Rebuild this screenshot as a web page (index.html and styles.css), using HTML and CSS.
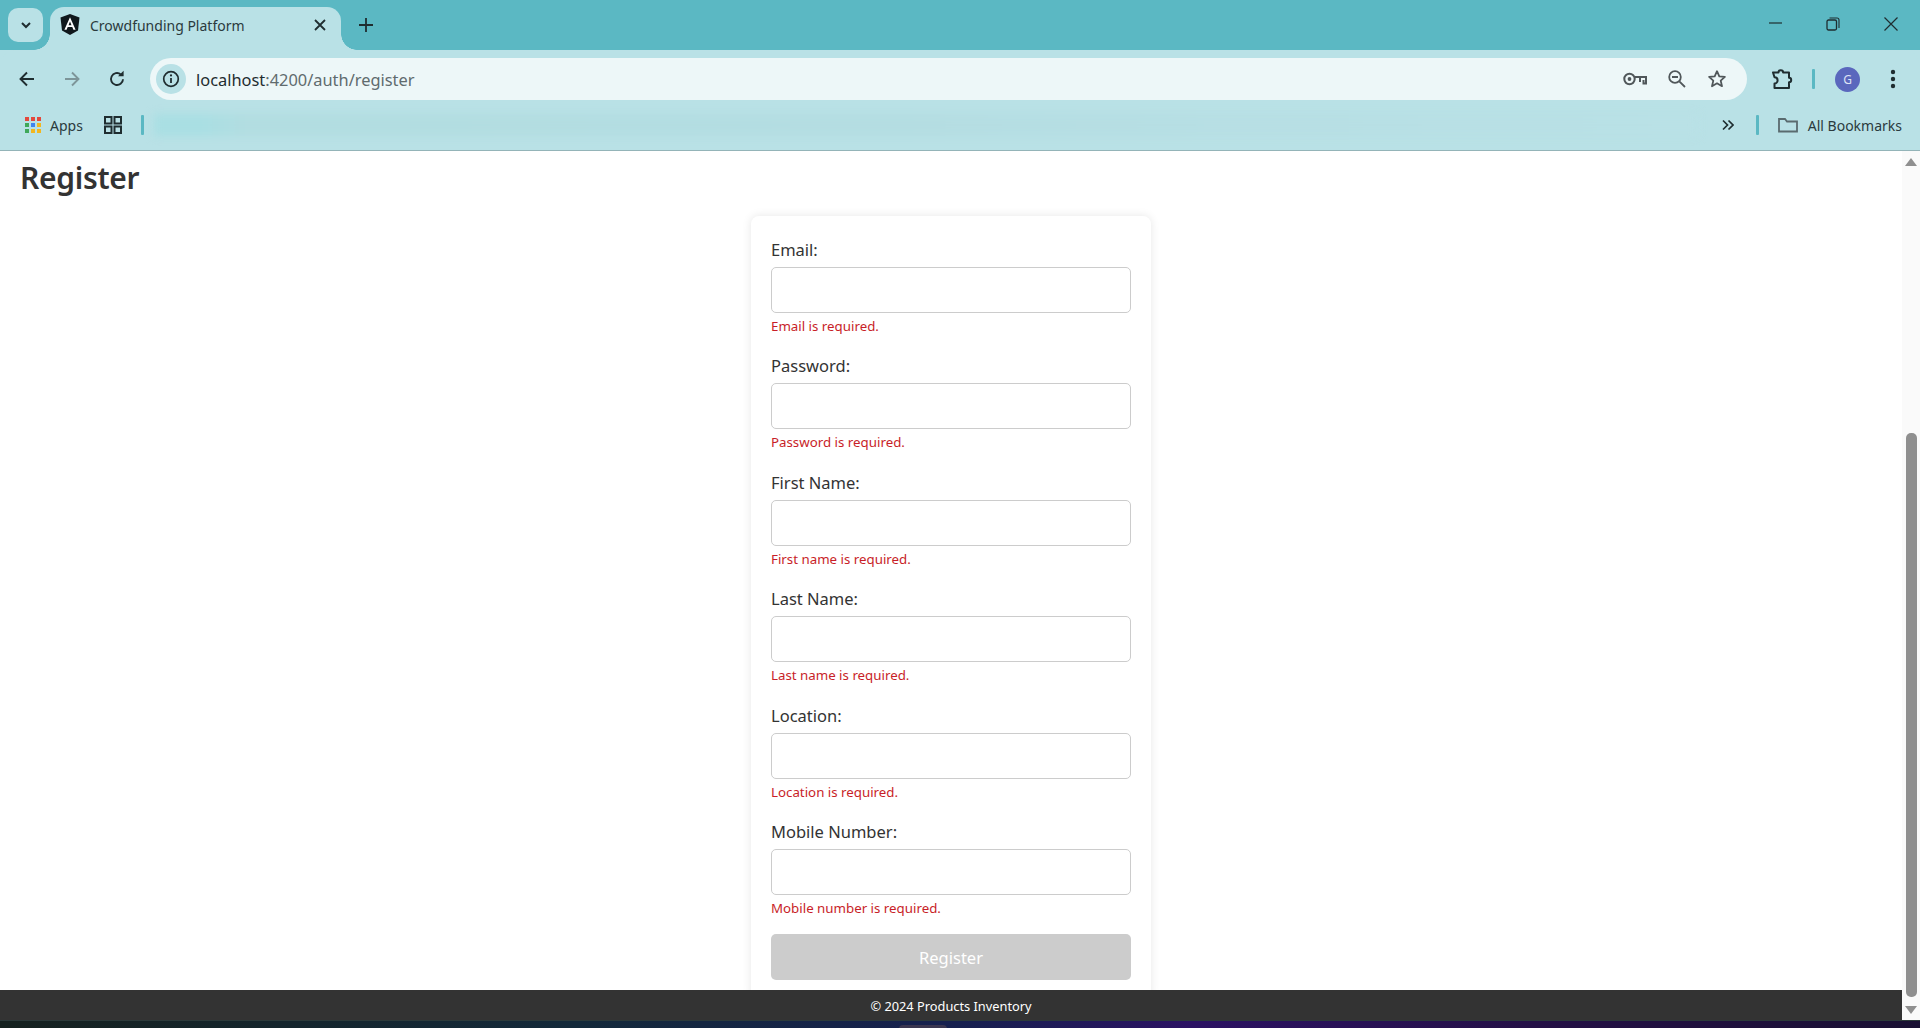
FILE: index.html
```html
<!DOCTYPE html>
<html lang="en">
<head>
    <meta charset="UTF-8">
    <meta name="viewport" content="width=device-width, initial-scale=1.0">
    <title>Crowdfunding Platform</title>
    <link rel="stylesheet" href="styles.css">
</head>
<body>
    <header class="browser">
        <div class="tabstrip">
            <button class="tab-search" aria-label="Search tabs">
                <svg width="14" height="14" viewBox="0 0 14 14"><path d="M3 5l4 4 4-4" fill="none" stroke="#1f2d30" stroke-width="2"/></svg>
            </button>
            <div class="tab">
                <svg class="favicon" width="20" height="22" viewBox="0 0 20 22"><path d="M10 0L19.5 3.4 18 16.4 10 21 2 16.4.5 3.4z" fill="#10181c"/><path d="M10 3.2L4.4 15.8h2.2l1.1-2.8h4.6l1.1 2.8h2.2zM8.500 11.200L10 7.500l1.500 3.700z" fill="#fff"/></svg>
                <span class="tab-title">Crowdfunding Platform</span>
                <svg class="tab-close" width="12" height="12" viewBox="0 0 12 12"><path d="M1 1l10 10M11 1L1 11" stroke="#1f2d30" stroke-width="1.8"/></svg>
            </div>
            <svg class="new-tab" width="14" height="14" viewBox="0 0 14 14"><path d="M7 0v14M0 7h14" stroke="#1f2d30" stroke-width="1.8"/></svg>
            <div class="window-controls">
                <svg width="14" height="14" viewBox="0 0 14 14"><path d="M1 6h13" stroke="#1f2d30" stroke-width="1.2"/></svg>
                <svg width="14" height="14" viewBox="0 0 14 14"><rect x="1" y="3" width="9.500" height="10" rx="1.500" fill="none" stroke="#1f2d30" stroke-width="1.3"/><path d="M3.500 1h7.500a2 2 0 0 1 2 2v8" fill="none" stroke="#1f2d30" stroke-width="1.1"/></svg>
                <svg width="14" height="14" viewBox="0 0 14 14"><path d="M.5.5l13 13M13.500.5l-13 13" stroke="#1f2d30" stroke-width="1.2"/></svg>
            </div>
        </div>

        <div class="toolbar">
            <svg class="nav-icon" width="18" height="18" viewBox="0 0 18 18"><path d="M16 9H3M9 2.500L2.500 9 9 15.500" fill="none" stroke="#1f2d30" stroke-width="1.9"/></svg>
            <svg class="nav-icon" width="18" height="18" viewBox="0 0 18 18"><path d="M2 9h13M9 2.500L15.500 9 9 15.500" fill="none" stroke="#7d9599" stroke-width="1.9"/></svg>
            <svg class="nav-icon" width="18" height="18" viewBox="0 0 18 18"><path d="M15 9.200A6 6 0 1 1 12.800 4.400" fill="none" stroke="#1f2d30" stroke-width="1.9"/><path d="M10 6.200h5.600V.8z" fill="#1f2d30"/></svg>
            <div class="omnibox">
                <span class="site-info">
                    <svg width="18" height="18" viewBox="0 0 18 18"><circle cx="9" cy="9" r="7.300" fill="none" stroke="#1f2d30" stroke-width="1.7"/><path d="M9 8v5" stroke="#1f2d30" stroke-width="1.8"/><circle cx="9" cy="5.400" r="1.100" fill="#1f2d30"/></svg>
                </span>
                <span class="url"><span class="url-host">localhost</span>:4200/auth/register</span>
                <svg class="omni-icon" width="24" height="14" viewBox="0 0 24 14"><circle cx="6.500" cy="7" r="5.200" fill="none" stroke="#50575a" stroke-width="2"/><circle cx="6.500" cy="7" r="1.900" fill="#50575a"/><path d="M11.500 5h11.500v6.500h-2.500V8M17 5.500v4.500" fill="none" stroke="#50575a" stroke-width="2"/></svg>
                <svg class="omni-icon" width="20" height="20" viewBox="0 0 20 20"><circle cx="8" cy="8" r="5.800" fill="none" stroke="#50575a" stroke-width="1.8"/><path d="M5 8h6M12.300 12.300L18 18" stroke="#50575a" stroke-width="1.8"/></svg>
                <svg class="omni-icon" width="20" height="20" viewBox="0 0 20 20"><path d="M10 2.200l2.300 5.200 5.600.5-4.200 3.700 1.300 5.600L10 14.300l-5 2.900 1.300-5.600-4.200-3.700 5.600-.5z" fill="none" stroke="#50575a" stroke-width="1.8" stroke-linejoin="round"/></svg>
            </div>
            <svg class="ext-icon" width="22" height="22" viewBox="0 0 22 22"><path d="M2 4.500h5.500a2.300 2.300 0 0 1 4.600 0H18v5.300a2.200 2.200 0 0 1 0 4.400V20H3.500v-4.500a2.800 2.800 0 0 0 0-6.200z" fill="none" stroke="#1f2d30" stroke-width="2" stroke-linejoin="round"/></svg>
            <span class="divider"></span>
            <span class="avatar">G</span>
            <svg class="kebab" width="6" height="20" viewBox="0 0 6 20"><circle cx="3" cy="3" r="2.200" fill="#1f2d30"/><circle cx="3" cy="10" r="2.200" fill="#1f2d30"/><circle cx="3" cy="17" r="2.200" fill="#1f2d30"/></svg>
        </div>

        <div class="bookmarks">
            <svg class="apps-icon" width="18" height="18" viewBox="0 0 18 18">
                <rect x="1" y="1" width="4" height="4" fill="#e3483c"/><rect x="7" y="1" width="4" height="4" fill="#e3483c"/><rect x="13" y="1" width="4" height="4" fill="#e3483c"/>
                <rect x="1" y="7" width="4" height="4" fill="#3fa85a"/><rect x="7" y="7" width="4" height="4" fill="#3f84ee"/><rect x="13" y="7" width="4" height="4" fill="#f2b71f"/>
                <rect x="1" y="13" width="4" height="4" fill="#3fa85a"/><rect x="7" y="13" width="4" height="4" fill="#f2b71f"/><rect x="13" y="13" width="4" height="4" fill="#f2b71f"/>
            </svg>
            <span class="bookmark-text">Apps</span>
            <svg class="group-icon" width="18" height="18" viewBox="0 0 18 18"><rect x="1" y="1" width="6.500" height="6.500" fill="none" stroke="#1f2d30" stroke-width="2"/><rect x="10.500" y="1" width="6.500" height="6.500" fill="none" stroke="#1f2d30" stroke-width="2"/><rect x="1" y="10.500" width="6.500" height="6.500" fill="none" stroke="#1f2d30" stroke-width="2"/><rect x="10.500" y="10.500" width="6.500" height="6.500" fill="none" stroke="#1f2d30" stroke-width="2"/></svg>
            <span class="divider"></span>
            <div class="blurred-links"></div>
            <svg class="more-icon" width="12" height="12" viewBox="0 0 12 12"><path d="M1 1.500L5.500 6 1 10.500M6.500 1.500L11 6l-4.500 4.500" fill="none" stroke="#1f2d30" stroke-width="1.7"/></svg>
            <span class="divider"></span>
            <svg class="folder-icon" width="20" height="18" viewBox="0 0 20 18"><path d="M1 15.500V3h6l2 2.500h10v10z" fill="none" stroke="#5a6b6f" stroke-width="1.800"/></svg>
            <span class="bookmark-text">All Bookmarks</span>
        </div>
    </header>

    <div class="viewport">
        <div class="page">
            <main class="content">
                <h1>Register</h1>
                <form class="register-card">
                    <div class="field">
                        <label for="email">Email:</label>
                        <input type="email" id="email">
                        <p class="error">Email is required.</p>
                    </div>
                    <div class="field">
                        <label for="password">Password:</label>
                        <input type="password" id="password">
                        <p class="error">Password is required.</p>
                    </div>
                    <div class="field">
                        <label for="firstName">First Name:</label>
                        <input type="text" id="firstName">
                        <p class="error">First name is required.</p>
                    </div>
                    <div class="field">
                        <label for="lastName">Last Name:</label>
                        <input type="text" id="lastName">
                        <p class="error">Last name is required.</p>
                    </div>
                    <div class="field">
                        <label for="location">Location:</label>
                        <input type="text" id="location">
                        <p class="error">Location is required.</p>
                    </div>
                    <div class="field">
                        <label for="mobile">Mobile Number:</label>
                        <input type="text" id="mobile">
                        <p class="error">Mobile number is required.</p>
                    </div>
                    <button class="submit" type="submit" disabled>Register</button>
                </form>
            </main>
            <footer class="site-footer">© 2024 Products Inventory</footer>
        </div>
        <div class="scrollbar">
            <span class="arrow-up"></span>
            <span class="thumb"></span>
            <span class="arrow-down"></span>
        </div>
    </div>

    <div class="taskbar"><span class="taskbar-item"></span></div>
</body>
</html>
```

FILE: styles.css
```css
* {
    box-sizing: border-box;
}
body {
    font-family: "Noto Sans", "Open Sans", sans-serif;
    margin: 0;
    height: 1028px;
    overflow: hidden;
    display: flex;
    flex-direction: column;
    background-color: #fff;
    color: #333;
}

/* browser chrome */
.browser {
    height: 151px;
    flex: none;
    background-color: #b9e1e6;
    border-bottom: 1px solid #94b4b8;
}
.tabstrip {
    height: 50px;
    background-color: #5bb8c3;
    display: flex;
    align-items: flex-start;
    position: relative;
}
.tab-search {
    width: 35px;
    height: 34px;
    margin: 8px 7px 0 8px;
    padding: 0;
    border: none;
    border-radius: 10px;
    background-color: #b9e1e6;
    display: flex;
    align-items: center;
    justify-content: center;
}
.tab {
    width: 291px;
    height: 43px;
    margin-top: 7px;
    padding: 0 15px 7px 10px;
    background-color: #b9e1e6;
    border-radius: 14px 14px 0 0;
    display: flex;
    align-items: center;
    gap: 10px;
    position: relative;
}
.tab::before,
.tab::after {
    content: "";
    position: absolute;
    bottom: 0;
    width: 16px;
    height: 16px;
}
.tab::before {
    left: -16px;
    background: radial-gradient(circle at 0 0, transparent 15.5px, #b9e1e6 16px);
}
.tab::after {
    right: -16px;
    background: radial-gradient(circle at 100% 0, transparent 15.5px, #b9e1e6 16px);
}
.tab-title {
    flex: 1;
    font-size: 14px;
    color: #2b3a3d;
    white-space: nowrap;
}
.new-tab {
    margin: 18px 0 0 18px;
}
.window-controls {
    margin: 17px 22px 0 auto;
    display: flex;
    gap: 44px;
}
.toolbar {
    height: 50px;
    display: flex;
    align-items: center;
    padding: 8px 24px 0 18px;
    background-color: #b9e1e6;
    border-radius: 16px 16px 0 0;
    margin-top: 0;
}
.nav-icon {
    margin-right: 27px;
}
.nav-icon:nth-child(3) {
    margin-right: 24px;
}
.omnibox {
    flex: 1;
    height: 42px;
    border-radius: 21px;
    background-color: #edf7f8;
    display: flex;
    align-items: center;
    padding: 0 20px 0 6px;
    gap: 20px;
}
.site-info {
    width: 30px;
    height: 30px;
    border-radius: 50%;
    background-color: #b9e1e6;
    display: flex;
    align-items: center;
    justify-content: center;
    margin-right: -10px;
}
.url {
    flex: 1;
    font-size: 16.4px;
    color: #5f6b6e;
    white-space: nowrap;
}
.url-host {
    color: #1f2d30;
}
.ext-icon {
    margin-left: 24px;
}
.divider {
    width: 3px;
    height: 20px;
    border-radius: 1px;
    background-color: #5bb8c3;
    flex: none;
}
.toolbar .divider {
    margin: 0 20px 0 19px;
}
.avatar {
    width: 25px;
    height: 25px;
    border-radius: 50%;
    background-color: #5a67bd;
    color: #dfe3f5;
    font-size: 12px;
    display: flex;
    align-items: center;
    justify-content: center;
}
.kebab {
    margin-left: 30px;
}
.bookmarks {
    height: 50px;
    display: flex;
    align-items: center;
    padding: 0 18px 0 24px;
    background-color: #b9e1e6;
}
.bookmark-text {
    font-size: 14px;
    color: #2b3a3d;
    white-space: nowrap;
}
.apps-icon {
    margin-right: 8px;
}
.group-icon {
    margin: 0 19px 0 21px;
}
.blurred-links {
    flex: 1;
    height: 22px;
    margin: 0 10px 0 10px;
    filter: blur(4px);
    background: linear-gradient(90deg, #a9dfe3 0, #a9dfe3 3%, #b2dde1 6%, #b4dde2 45%, #b7dfe4 70%, #b9e1e6 100%);
}
.more-icon {
    margin: 0 22px 0 14px;
}
.folder-icon {
    margin: 0 10px 0 19px;
}

/* page */
.viewport {
    flex: 1;
    display: flex;
    min-height: 0;
}
.page {
    flex: 1;
    display: flex;
    flex-direction: column;
    min-width: 0;
}
.content {
    flex: 1;
    min-height: 0;
    overflow: hidden;
}
h1 {
    margin: 7px 0 18px 20px;
    font-size: 30px;
    line-height: 40px;
    font-weight: 600;
    letter-spacing: -0.3px;
    color: #333;
}
.register-card {
    width: 400px;
    margin: 0 auto;
    padding: 20px;
    border-radius: 8px;
    background-color: #fff;
    box-shadow: 0 0 10px rgba(0, 0, 0, 0.1);
}
.field {
    margin-bottom: 16.4px;
}
label {
    display: block;
    height: 31px;
    font-size: 16.5px;
    line-height: 28px;
    color: #333;
}
input {
    display: block;
    width: 100%;
    height: 46px;
    border: 1px solid #ccc;
    border-radius: 5px;
    background-color: #fff;
}
.error {
    margin: 3px 0 0;
    font-size: 13.3px;
    line-height: 20px;
    color: #c81e28;
}
.submit {
    display: block;
    width: 100%;
    height: 46px;
    border: none;
    border-radius: 5px;
    background-color: #ccc;
    color: #fff;
    font-family: inherit;
    font-size: 16.5px;
}
.site-footer {
    height: 30px;
    flex: none;
    background-color: #333;
    color: #fff;
    font-size: 12.8px;
    line-height: 32px;
    text-align: center;
}

/* fake scrollbar, the page is scrolled down */
.scrollbar {
    width: 18px;
    flex: none;
    background-color: #fafafa;
    display: flex;
    flex-direction: column;
    align-items: center;
    padding: 7px 0 6px;
}
.arrow-up,
.arrow-down {
    width: 0;
    height: 0;
    border-left: 6.5px solid transparent;
    border-right: 6.5px solid transparent;
}
.arrow-up {
    border-bottom: 8px solid #8f8f8f;
}
.arrow-down {
    border-top: 8px solid #8f8f8f;
    margin-top: auto;
}
.thumb {
    width: 11px;
    height: 564px;
    margin-top: 267px;
    border-radius: 5px;
    background-color: #8f8f8f;
}

.taskbar {
    height: 8px;
    flex: none;
    background: linear-gradient(90deg, #15211f 0, #13293a 30%, #16204f 50%, #2b1263 62%, #241046 80%, #191033 100%);
    border-top: 1px solid #2c3a3a;
    display: flex;
    justify-content: center;
    overflow: hidden;
}
.taskbar-item {
    width: 48px;
    height: 8px;
    margin: 4px 74px 0 0;
    border-radius: 4px 4px 0 0;
    background-color: #3a3650;
}
```
